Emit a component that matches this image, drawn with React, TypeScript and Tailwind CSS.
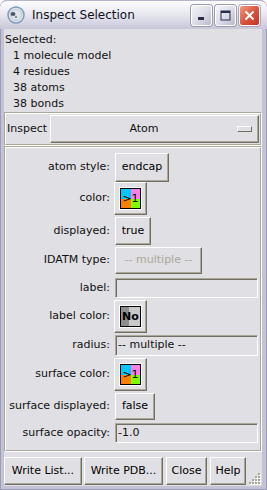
import React from "react";

const raised =
  "border border-t-white border-l-white border-r-[#716f64] border-b-[#716f64] shadow-[inset_-1px_-1px_0_#aca899]";
const sunken =
  "border border-t-[#aca899] border-l-[#aca899] border-r-white border-b-white shadow-[inset_1px_1px_0_#716f64]";

function Groove({ className = "", children }: { className?: string; children: React.ReactNode }) {
  return (
    <div className={`border border-t-[#aca899] border-l-[#aca899] border-r-white border-b-white ${className}`}>
      <div className="h-full border border-t-white border-l-white border-r-[#aca899] border-b-[#aca899]">{children}</div>
    </div>
  );
}

function ColorWell({ multi = true }: { multi?: boolean }) {
  return (
    <div className={`w-[33px] h-[33px] bg-[#e0dfe3] ${raised} flex items-center justify-center`}>
      <div className="w-[23px] h-[23px] border border-white flex">
        <div className="relative w-full h-full border border-black">
          {multi ? (
            <div className="grid grid-cols-2 grid-rows-2 w-full h-full">
              <div className="bg-[#00c8ff]" />
              <div className="bg-[#ff80e8]" />
              <div className="bg-[#ff8000]" />
              <div className="bg-[#80ff00]" />
            </div>
          ) : (
            <div className="flex w-full h-full">
              <div className="w-[8px] bg-[#8e8e8e]" />
              <div className="flex-1 bg-[#c9c9c9]" />
            </div>
          )}
          <span
            className={`absolute inset-0 flex items-center justify-center text-[11px] leading-none text-black ${
              multi ? "" : "font-bold text-[10px]"
            }`}
          >
            {multi ? ">1" : "No"}
          </span>
        </div>
      </div>
    </div>
  );
}

function Btn({ w, h, children, disabled }: { w: string; h: string; children: React.ReactNode; disabled?: boolean }) {
  return (
    <div
      className={`${w} ${h} ${raised} bg-[#e0dfe3] flex items-center justify-center ${
        disabled ? "text-[#aca899]" : "text-black"
      }`}
    >
      {children}
    </div>
  );
}

function Entry({ h, children }: { h: string; children?: React.ReactNode }) {
  return (
    <div className={`flex-1 mr-[2px] ${h} ${sunken} bg-[#e0dfe3] flex items-center pl-[2px]`}>{children}</div>
  );
}

function Row({ label, mt, children }: { label: string; mt: string; children: React.ReactNode }) {
  return (
    <div className={`flex items-center ${mt}`}>
      <div className="w-[104px] text-right pr-[0px]">{label}</div>
      <div className="flex-1 flex items-center pl-[4px]">{children}</div>
    </div>
  );
}

function TitleBtn({ kind }: { kind: "min" | "max" | "close" }) {
  if (kind === "close") {
    return (
      <div className="w-[21px] h-[21px] rounded-[3px] border border-white bg-gradient-to-br from-[#f09a84] via-[#d9553e] to-[#c03520] shadow-[0_0_0_1px_#b0a0b8] flex items-center justify-center">
        <svg width="11" height="11" viewBox="0 0 11 11">
          <path d="M1.5 1.5 L9.5 9.5 M9.5 1.5 L1.5 9.5" stroke="white" strokeWidth="2" />
        </svg>
      </div>
    );
  }
  return (
    <div className="w-[21px] h-[21px] rounded-[3px] border border-white bg-gradient-to-br from-[#f4f4f8] via-[#dedee8] to-[#b9b9ce] shadow-[0_0_0_1px_#9a9ab2] flex items-center justify-center">
      {kind === "min" ? (
        <svg width="11" height="11" viewBox="0 0 11 11">
          <rect x="2" y="7" width="6" height="3" fill="#2a2a4a" />
        </svg>
      ) : (
        <svg width="11" height="11" viewBox="0 0 11 11">
          <rect x="1" y="1" width="9" height="9" fill="none" stroke="#2a2a4a" strokeWidth="1" />
          <rect x="1" y="1" width="9" height="2" fill="#2a2a4a" />
        </svg>
      )}
    </div>
  );
}

export default function App() {
  return (
    <div className="w-[267px] h-[490px] flex flex-col rounded-t-[7px] overflow-hidden bg-[#c4c3d6] shadow-[inset_1px_0_0_#9d9cb5,inset_-1px_0_0_#9d9cb5,inset_0_-1px_0_#9d9cb5] font-['DejaVu_Sans',sans-serif] text-[11px] text-[#111]">
      {/* title bar */}
      <div className="h-[29px] flex items-center bg-gradient-to-b from-[#fdfdff] via-[#e6e6ef] to-[#c8c7d9] border-t border-[#b5b4cb] rounded-t-[7px] px-[6px]">
        <svg width="20" height="20" viewBox="0 0 20 20" className="shrink-0">
          <circle cx="10" cy="10" r="8" fill="#dfe6ee" stroke="#7f9bb8" strokeWidth="1.5" />
          <circle cx="10" cy="10" r="5.5" fill="none" stroke="#b9c8d8" strokeWidth="1" />
          <ellipse cx="7" cy="9" rx="2.5" ry="2" fill="#505a66" />
          <circle cx="10" cy="12" r="1.3" fill="#8a95a2" />
        </svg>
        <span className="ml-[6px] text-[12px] text-[#101020]">Inspect Selection</span>
        <div className="ml-auto flex gap-[3px] mr-[1px]">
          <TitleBtn kind="min" />
          <TitleBtn kind="max" />
          <TitleBtn kind="close" />
        </div>
      </div>

      {/* client */}
      <div className="flex-1 flex flex-col ml-[4px] mr-[5px] mb-[4px] bg-[#e0dfe3]">
        <div className="pt-[3px] pl-[1px] leading-[16px]">
          <div>Selected:</div>
          <div className="pl-[8px]">1 molecule model</div>
          <div className="pl-[8px]">4 residues</div>
          <div className="pl-[8px]">38 atoms</div>
          <div className="pl-[8px]">38 bonds</div>
        </div>

        <Groove className="h-[34px]">
          <div className="h-full flex items-center">
            <span className="pl-[1px] w-[44px]">Inspect</span>
            <div className={`flex-1 mr-[1px] h-[28px] ${raised} bg-[#e0dfe3] flex items-center`}>
              <span className="flex-1 text-center">Atom</span>
              <div className="w-[15px] h-[6px] mr-[6px] border border-t-white border-l-white border-r-[#716f64] border-b-[#716f64] bg-[#e0dfe3]" />
            </div>
          </div>
        </Groove>

        <Groove className="h-[306px]">
          <div className="flex flex-col">
            <Row label="atom style:" mt="mt-[5px]">
              <div className="ml-[1px]">
                <Btn w="w-[54px]" h="h-[29px]">endcap</Btn>
              </div>
            </Row>
            <Row label="color:" mt="mt-0">
              <ColorWell />
            </Row>
            <Row label="displayed:" mt="mt-[2px]">
              <div className="ml-[1px]">
                <Btn w="w-[36px]" h="h-[28px]">true</Btn>
              </div>
            </Row>
            <Row label="IDATM type:" mt="mt-[2px]">
              <div className="ml-[1px]">
                <Btn w="w-[87px]" h="h-[27px]" disabled>
                  -- multiple --
                </Btn>
              </div>
            </Row>
            <Row label="label:" mt="mt-[4px]">
              <div className="ml-[1px] flex-1 flex">
                <Entry h="h-[20px]" />
              </div>
            </Row>
            <Row label="label color:" mt="mt-[2px]">
              <ColorWell multi={false} />
            </Row>
            <Row label="radius:" mt="mt-[2px]">
              <div className="ml-[1px] flex-1 flex">
                <Entry h="h-[21px]">-- multiple --</Entry>
              </div>
            </Row>
            <Row label="surface color:" mt="mt-[2px]">
              <ColorWell />
            </Row>
            <Row label="surface displayed:" mt="mt-[2px]">
              <div className="ml-[1px]">
                <Btn w="w-[40px]" h="h-[27px]">false</Btn>
              </div>
            </Row>
            <Row label="surface opacity:" mt="mt-[3px]">
              <div className="ml-[1px] flex-1 flex">
                <Entry h="h-[20px]">-1.0</Entry>
              </div>
            </Row>
          </div>
        </Groove>

        <div className="flex-1 flex items-start pt-[5px] relative">
          <Btn w="w-[78px]" h="h-[28px]">Write List...</Btn>
          <div className="ml-[2px]">
            <Btn w="w-[79px]" h="h-[28px]">Write PDB...</Btn>
          </div>
          <div className="ml-[3px]">
            <Btn w="w-[41px]" h="h-[28px]">Close</Btn>
          </div>
          <div className="ml-[3px]">
            <Btn w="w-[36px]" h="h-[28px]">Help</Btn>
          </div>
          <svg width="12" height="12" viewBox="0 0 12 12" className="absolute right-[1px] bottom-[1px]">
            {[
              [9, 0],
              [6, 3],
              [9, 3],
              [3, 6],
              [6, 6],
              [9, 6],
              [0, 9],
              [3, 9],
              [6, 9],
              [9, 9],
            ].map(([x, y], i) => (
              <g key={i}>
                <rect x={x + 1} y={y + 1} width="2" height="2" fill="#ffffff" />
                <rect x={x} y={y} width="2" height="2" fill="#aca899" />
              </g>
            ))}
          </svg>
        </div>
      </div>
    </div>
  );
}
